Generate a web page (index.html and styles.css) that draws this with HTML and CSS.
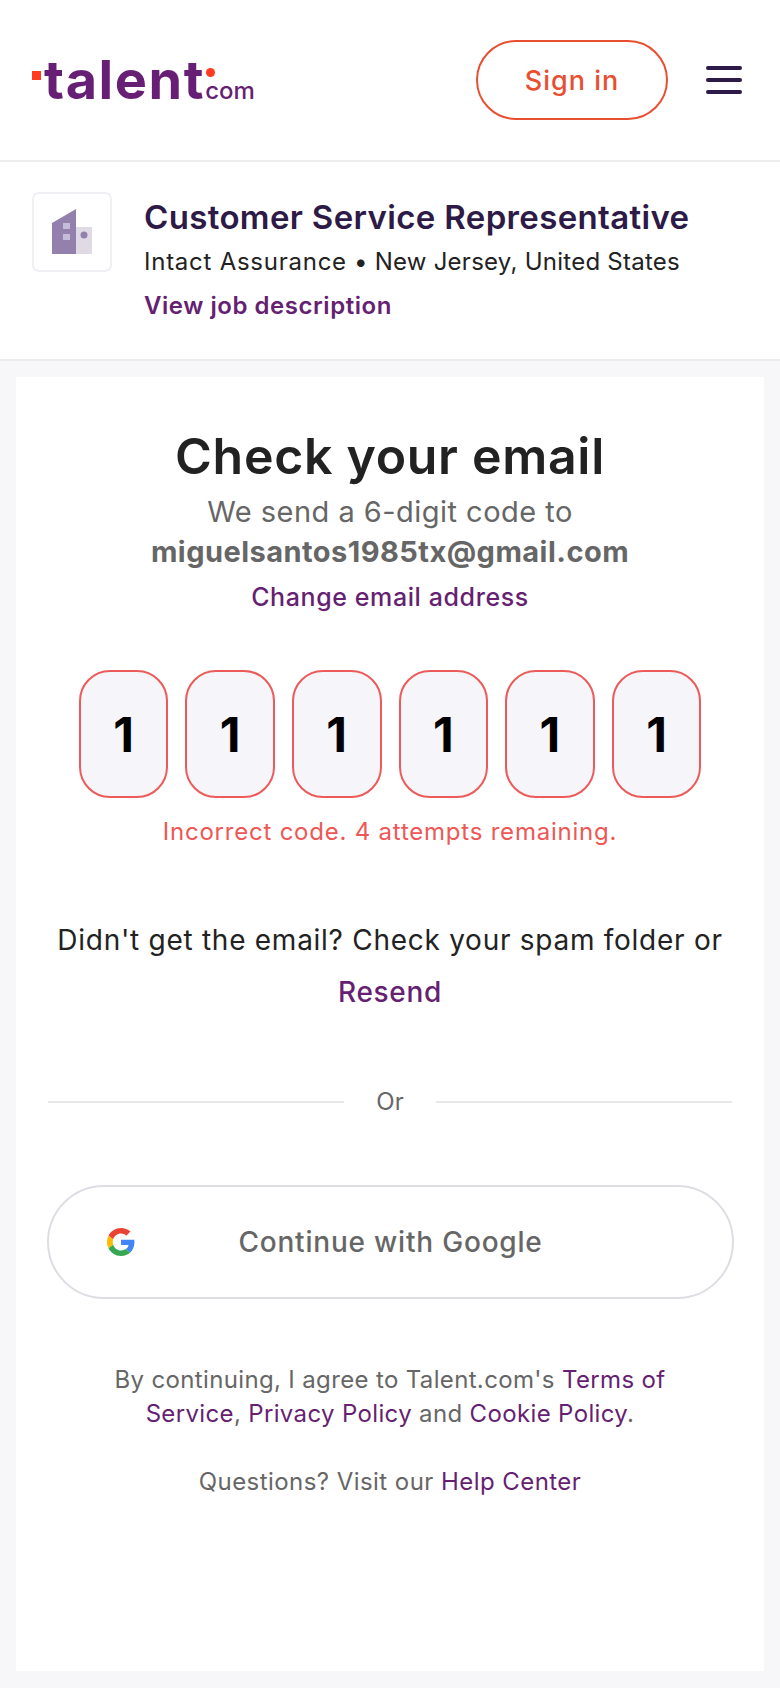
FILE: index.html
```html
<!DOCTYPE html>
<html lang="en">
<head>
  <meta charset="UTF-8" />
  <meta name="viewport" content="width=device-width, initial-scale=1.0"/>
  <title>Check your email</title>
  <link rel="stylesheet" href="styles.css">
</head>
<body>
  <header class="topbar">
    <a class="logo" href="#">
      <span class="logo-square"></span>
      <span class="logo-name">talent</span>
      <span class="logo-end">
        <span class="logo-dot"></span>
        <span class="logo-com">com</span>
      </span>
    </a>
    <div class="topbar-right">
      <a class="signin" href="#">Sign in</a>
      <div class="burger"><span></span><span></span><span></span></div>
    </div>
  </header>

  <section class="job">
    <div class="job-logo">
      <svg width="42" height="46" viewBox="0 0 42 46">
        <path d="M1 14 L25 0 V45 H1 Z" fill="#9480ad"/>
        <rect x="25" y="18" width="16" height="27" fill="#e0dae4"/>
        <rect x="12" y="14" width="7" height="6" fill="#c5bdd8"/>
        <rect x="12" y="25" width="7" height="6" fill="#c5bdd8"/>
        <circle cx="33" cy="26" r="3.500" fill="#9480ad"/>
      </svg>
    </div>
    <div class="job-info">
      <h1 class="job-title">Customer Service Representative</h1>
      <p class="job-meta"><span class="job-company">Intact Assurance</span><span class="sep">•</span><span>New Jersey, United States</span></p>
      <a class="job-link" href="#">View job description</a>
    </div>
  </section>

  <main class="wrap">
    <div class="card">
      <h2 class="heading">Check your email</h2>
      <p class="sent">We send a 6-digit code to</p>
      <p class="address">miguelsantos1985tx@gmail.com</p>
      <a class="change" href="#">Change email address</a>

      <div class="code">
        <div class="digit">1</div>
        <div class="digit">1</div>
        <div class="digit">1</div>
        <div class="digit">1</div>
        <div class="digit">1</div>
        <div class="digit">1</div>
      </div>
      <p class="error">Incorrect code. 4 attempts remaining.</p>

      <p class="spam">Didn't get the email? Check your spam folder or</p>
      <a class="resend" href="#">Resend</a>

      <div class="divider"><span>Or</span></div>

      <button class="google" type="button">
        <svg class="g-icon" width="28" height="28" viewBox="0 0 48 48">
          <path fill="#EA4335" d="M24 9.500c3.500 0 6.700 1.200 9.200 3.600l6.900-6.900C35.900 2.400 30.500 0 24 0 14.600 0 6.500 5.400 2.600 13.200l8 6.200C12.400 13.700 17.700 9.500 24 9.500z"/>
          <path fill="#4285F4" d="M47 24.500c0-1.600-.1-3.100-.4-4.500H24v9h12.900c-.6 3-2.200 5.500-4.700 7.200l7.700 6C44.400 37.900 47 31.800 47 24.500z"/>
          <path fill="#FBBC05" d="M10.600 28.600c-.5-1.400-.8-3-.8-4.600s.3-3.200.8-4.600l-8-6.200C.9 16.500 0 20.100 0 24s.9 7.500 2.600 10.800l8-6.200z"/>
          <path fill="#34A853" d="M24 48c6.500 0 11.900-2.100 15.900-5.800l-7.700-6c-2.200 1.400-4.900 2.300-8.200 2.300-6.300 0-11.600-4.200-13.400-9.900l-8 6.200C6.500 42.600 14.600 48 24 48z"/>
        </svg>
        Continue with Google
      </button>

      <p class="legal">By continuing, I agree to Talent.com's <a href="#">Terms of</a><br><a href="#">Service</a>, <a href="#">Privacy Policy</a> and <a href="#">Cookie Policy</a>.</p>
      <p class="help">Questions? Visit our <a href="#">Help Center</a></p>
    </div>
  </main>
</body>
</html>
```

FILE: styles.css
```css
* {
  box-sizing: border-box;
}
body {
  margin: 0;
  height: 1688px;
  font-family: Inter, 'Noto Sans', sans-serif;
  background: #f7f7fa;
  overflow: hidden;
}
a {
  text-decoration: none;
}
p, h1, h2 {
  margin: 0;
}

.topbar {
  height: 162px;
  background: #fff;
  border-bottom: 2px solid #ececec;
  display: flex;
  align-items: center;
  justify-content: space-between;
  padding: 0 38px 0 32px;
}
.logo {
  display: flex;
  align-items: flex-end;
  height: 42px;
}
.logo-square {
  width: 9px;
  height: 9px;
  background: #ff3b21;
  margin: 0 3px 21px 0;
}
.logo-name {
  font-size: 54px;
  line-height: 42px;
  font-weight: 700;
  color: #671e75;
  letter-spacing: 1.6px;
}
.logo-end {
  display: flex;
  flex-direction: column;
  align-items: flex-start;
}
.logo-dot {
  width: 9px;
  height: 9px;
  border-radius: 50%;
  background: #ff3b21;
  margin: 0 0 4px 1px;
}
.logo-com {
  font-size: 24px;
  line-height: 20px;
  font-weight: 500;
  color: #671e75;
}
.topbar-right {
  display: flex;
  align-items: center;
  gap: 38px;
}
.signin {
  width: 192px;
  height: 80px;
  border: 2px solid #e84f30;
  border-radius: 40px;
  display: flex;
  align-items: center;
  justify-content: center;
  color: #e84f30;
  font-size: 27px;
  font-weight: 500;
  letter-spacing: 1px;
}
.burger {
  width: 36px;
  display: flex;
  flex-direction: column;
  gap: 8px;
}
.burger span {
  height: 4px;
  border-radius: 2px;
  background: #2e1a47;
}

.job {
  height: 199px;
  background: #fff;
  border-bottom: 2px solid #ececec;
  display: flex;
  align-items: flex-start;
  padding: 30px 32px 0;
  gap: 32px;
}
.job-logo {
  width: 80px;
  height: 80px;
  border: 2px solid #f0eff4;
  border-radius: 7px;
  display: flex;
  align-items: center;
  justify-content: center;
  flex-shrink: 0;
}
.job-info {
  padding-top: 2px;
}
.job-title {
  font-size: 33px;
  line-height: 46px;
  font-weight: 600;
  letter-spacing: 0.35px;
  color: #2e1a47;
}
.job-meta {
  font-size: 24px;
  line-height: 44px;
  letter-spacing: 0.25px;
  color: #222;
  display: flex;
}
.job-company {
  letter-spacing: 0.75px;
}
.job-meta .sep {
  margin: 0 7px;
}
.job-link {
  display: block;
  font-size: 24px;
  line-height: 44px;
  font-weight: 600;
  letter-spacing: 0.54px;
  color: #661f72;
}

.wrap {
  padding: 16px;
}
.card {
  height: 1294px;
  background: #fff;
  padding: 43px 32px 0;
  text-align: center;
}
.heading {
  font-size: 50px;
  line-height: 72px;
  font-weight: 600;
  letter-spacing: 0.7px;
  color: #222;
}
.sent {
  font-size: 29px;
  line-height: 40px;
  letter-spacing: 0.47px;
  color: #666;
}
.address {
  font-size: 29px;
  line-height: 40px;
  font-weight: 700;
  letter-spacing: 0.46px;
  color: #666;
}
.change {
  display: block;
  font-size: 25px;
  line-height: 50px;
  font-weight: 500;
  letter-spacing: 0.6px;
  color: #661f72;
}
.code {
  display: flex;
  justify-content: center;
  gap: 17px;
  margin-top: 48px;
}
.digit {
  width: 89.6px;
  height: 128px;
  background: #f5f5fa;
  border: 2px solid #ec5a5a;
  border-radius: 31px;
  display: flex;
  align-items: center;
  justify-content: center;
  font-size: 48px;
  font-weight: 700;
  color: #000;
}
.error {
  margin-top: 16px;
  font-size: 24px;
  line-height: 36px;
  letter-spacing: 0.78px;
  color: #ef5757;
}
.spam {
  margin-top: 64px;
  font-size: 28px;
  line-height: 52px;
  letter-spacing: 0.73px;
  color: #222;
}
.resend {
  display: block;
  font-size: 28px;
  line-height: 52px;
  font-weight: 500;
  letter-spacing: 0.7px;
  color: #661f72;
}
.divider {
  display: flex;
  align-items: center;
  gap: 32px;
  margin-top: 64px;
  font-size: 24px;
  line-height: 40px;
  color: #666;
}
.divider::before,
.divider::after {
  content: "";
  flex: 1;
  height: 2px;
  background: #e8e8e8;
}
.google {
  position: relative;
  display: block;
  width: 687px;
  height: 114px;
  margin: 63px 0 0 -1px;
  background: #fff;
  border: 2px solid #e0dce3;
  border-radius: 57px;
  font-family: inherit;
  font-size: 28px;
  font-weight: 500;
  letter-spacing: 0.8px;
  color: #666;
}
.g-icon {
  position: absolute;
  left: 58px;
  top: 41px;
}
.legal {
  margin-top: 64px;
  font-size: 24px;
  line-height: 34px;
  letter-spacing: 0.35px;
  color: #666;
}
.legal a,
.help a {
  color: #661f72;
}
.help {
  margin-top: 34px;
  font-size: 24px;
  line-height: 34px;
  letter-spacing: 0.44px;
  color: #666;
}
```
